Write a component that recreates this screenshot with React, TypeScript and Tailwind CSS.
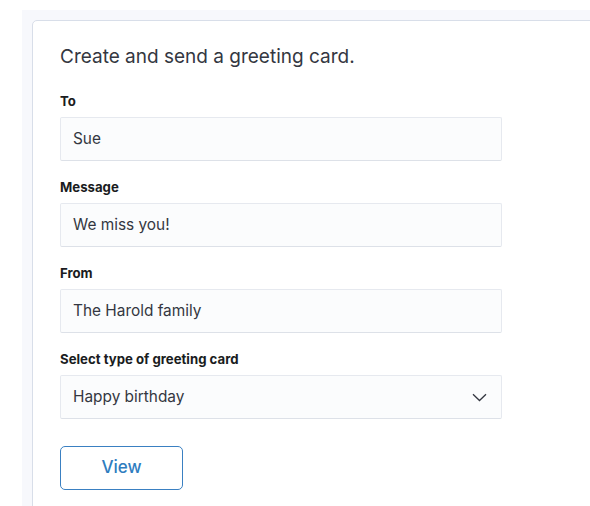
import React from "react";

function Field({ label, value, select }: { label: string; value: string; select?: boolean }) {
  return (
    <div className="flex flex-col">
      <label className="h-[20px] text-[13.2px] font-bold leading-[20px] text-[#1a1c21]">{label}</label>
      <div className="mt-[6px] flex h-[44px] w-[442px] items-center justify-between rounded-[2px] border border-[#e6e9ef] border-b-[#dde1e8] bg-[#fbfcfd] pl-[12px] pr-[14px] text-[15.4px] text-[#343741]">
        <span>{value}</span>
        {select && (
          <svg width="15" height="9" viewBox="0 0 15 9" fill="none">
            <path d="M1 1.2l6.5 6.3L14 1.2" stroke="#343741" strokeWidth="1.3" />
          </svg>
        )}
      </div>
    </div>
  );
}

export default function App() {
  return (
    <div className="h-[506px] w-[590px] overflow-hidden bg-white" style={{ fontFamily: "Inter, 'Noto Sans', sans-serif" }}>
      <div className="ml-[22px] mt-[10px] h-[600px] w-[600px] bg-[#f7f8fc] pl-[10px] pt-[10px]">
        <div className="h-[600px] w-[600px] rounded-tl-[5px] border border-[#d8dee9] bg-white pl-[27px] pt-[23px]">
          <h1 className="text-[19px] leading-[26px] text-[#343741]">Create and send a greeting card.</h1>
          <div className="mt-[21px] flex flex-col gap-[16px]">
            <Field label="To" value="Sue" />
            <Field label="Message" value="We miss you!" />
            <Field label="From" value="The Harold family" />
            <Field label="Select type of greeting card" value="Happy birthday" select />
          </div>
          <button className="mt-[27px] h-[44px] w-[123px] rounded-[5px] border border-[#3a80c2] text-[17px] font-medium text-[#2f7dbf]">
            View
          </button>
        </div>
      </div>
    </div>
  );
}
